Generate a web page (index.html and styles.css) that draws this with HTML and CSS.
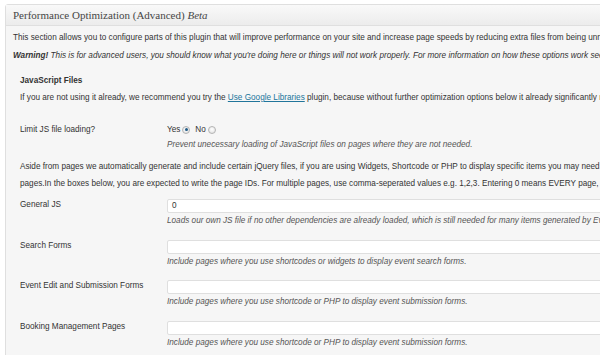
FILE: index.html
```html
<!DOCTYPE html>
<html>
<head>
<meta charset="utf-8">
<link rel="stylesheet" href="styles.css">
</head>
<body>
<div class="postbox">
  <h3 class="hndle">Performance Optimization (Advanced) <em>Beta</em></h3>
  <div class="inside">
    <p class="intro">This section allows you to configure parts of this plugin that will improve performance on your site and increase page speeds by reducing extra files from being unnecessarily included on pages.</p>
    <p class="warning"><strong>Warning!</strong> This is for advanced users, you should know what you're doing here or things will not work properly. For more information on how these options work see our documentation.</p>
    <div class="section">
      <h4 class="sec-title">JavaScript Files</h4>
      <p class="sec-text">If you are not using it already, we recommend you try the <a href="#">Use Google Libraries</a> plugin, because without further optimization options below it already significantly reduces loading times.</p>

      <div class="row row-radio">
        <div class="label">Limit JS file loading?</div>
        <div class="field">
          <div class="radios">
            <span class="opt">Yes <span class="radio checked"></span></span>
            <span class="opt">No <span class="radio"></span></span>
          </div>
          <div class="desc">Prevent unecessary loading of JavaScript files on pages where they are not needed.</div>
        </div>
      </div>

      <p class="aside">Aside from pages we automatically generate and include certain jQuery files, if you are using Widgets, Shortcode or PHP to display specific items you may need to tell us which<br>pages.In the boxes below, you are expected to write the page IDs. For multiple pages, use comma-seperated values e.g. 1,2,3. Entering 0 means EVERY page, -1 means the home page.</p>

      <div class="row">
        <div class="label">General JS</div>
        <div class="field">
          <div class="input">0</div>
          <div class="desc">Loads our own JS file if no other dependencies are already loaded, which is still needed for many items generated by Events Manager.</div>
        </div>
      </div>
      <div class="row">
        <div class="label">Search Forms</div>
        <div class="field">
          <div class="input"></div>
          <div class="desc">Include pages where you use shortcodes or widgets to display event search forms.</div>
        </div>
      </div>
      <div class="row">
        <div class="label">Event Edit and Submission Forms</div>
        <div class="field">
          <div class="input"></div>
          <div class="desc">Include pages where you use shortcode or PHP to display event submission forms.</div>
        </div>
      </div>
      <div class="row">
        <div class="label">Booking Management Pages</div>
        <div class="field">
          <div class="input"></div>
          <div class="desc">Include pages where you use shortcode or PHP to display event submission forms.</div>
        </div>
      </div>
    </div>
  </div>
</div>
</body>
</html>
```

FILE: styles.css
```css
html, body {
  margin: 0;
  padding: 0;
  background: #ffffff;
  overflow: hidden;
}
body {
  font-family: "Liberation Sans", Arial, sans-serif;
  font-size: 8.2px;
  color: #333333;
}
.postbox {
  margin: 4px 0 0 5px;
  width: 980px;
  border: 1px solid #dfdfdf;
  border-radius: 3px 0 0 0;
  background: #f6f6f6;
}
.hndle {
  margin: 0;
  height: 20px;
  line-height: 20px;
  padding-left: 7px;
  font-family: "Liberation Serif", "Times New Roman", serif;
  font-weight: normal;
  font-size: 11px;
  color: #464646;
  background: linear-gradient(#f9f9f9, #ececec);
  border-bottom: 1px solid #dfdfdf;
  white-space: nowrap;
}
.inside {
  padding: 0 7px 20px 7px;
}
p {
  margin: 0;
  line-height: 17px;
  white-space: nowrap;
}
.intro {
  padding-top: 3px;
}
.warning {
  margin-top: 1px;
  font-style: italic;
}
.section {
  padding-left: 7px;
}
.sec-title {
  margin: 8px 0 0 0;
  font-size: 8.2px;
  line-height: 17px;
  font-weight: bold;
  color: #333333;
}
.sec-text a {
  color: #21759b;
}
.row {
  display: flex;
  white-space: nowrap;
}
.label {
  width: 147px;
  flex: none;
  line-height: 11px;
}
.row-radio {
  margin-top: 18px;
}
.radios {
  line-height: 11px;
  display: flex;
  gap: 5px;
}
.opt {
  display: inline-flex;
  align-items: center;
  gap: 2px;
}
.radio {
  display: inline-block;
  width: 6px;
  height: 6px;
  border-radius: 50%;
  border: 1px solid #b4b4b4;
  background: radial-gradient(circle at 50% 40%, #ffffff, #dcdcdc);
  position: relative;
}
.radio.checked::after {
  content: "";
  position: absolute;
  left: 1.5px;
  top: 1.5px;
  width: 3px;
  height: 3px;
  border-radius: 50%;
  background: #1f5a86;
}
.desc {
  font-style: italic;
  color: #555555;
  line-height: 11px;
}
.row-radio .desc {
  margin-top: 4px;
}
.aside {
  margin-top: 8px;
}
.row + .row {
  margin-top: 13.5px;
}
.aside + .row {
  margin-top: 7px;
}
.row .input {
  width: 520px;
  height: 14px;
  box-sizing: border-box;
  border: 1px solid #dfdfdf;
  border-radius: 2px;
  background: #ffffff;
  padding-left: 4px;
  line-height: 12px;
  color: #333333;
}
.row:not(.row-radio) .desc {
  margin-top: 2px;
}
```
